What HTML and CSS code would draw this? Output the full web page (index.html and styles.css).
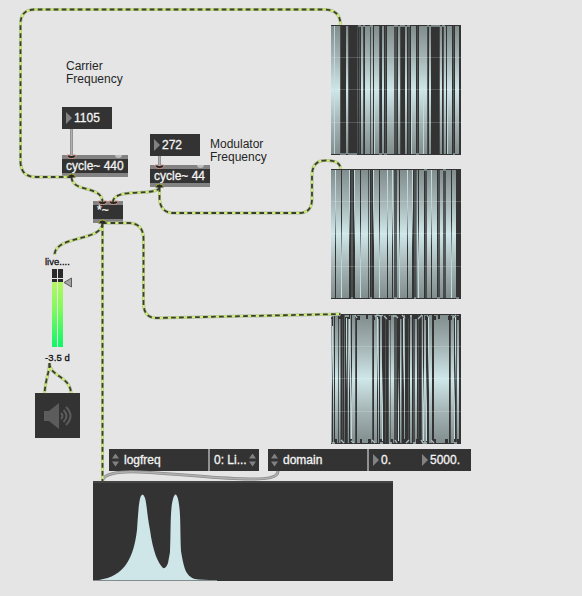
FILE: index.html
```html
<!DOCTYPE html>
<html lang="en">
<head>
<meta charset="utf-8">
<title>Ring modulation patch</title>
<link rel="stylesheet" href="styles.css">
</head>
<body>
<main class="patcher">
  <p class="comment carrier">Carrier<br>Frequency</p>
  <p class="comment modulator">Modulator<br>Frequency</p>

  <div class="node number n-carrier"><i class="tri"></i><span>1105</span></div>
  <div class="node number n-mod"><i class="tri"></i><span>272</span></div>
  <div class="node object o-carrier"><span>cycle~ 440</span></div>
  <div class="node object o-mod"><span>cycle~ 44</span></div>
  <div class="node object o-mul"><span>*~</span></div>

  <div class="gain-name">live....</div>
  <div class="gain"><i></i><i></i></div>
  <div class="gain-value">-3.5 d</div>
  <div class="dac">
    <svg width="45" height="45" viewBox="0 0 45 45"><path d="M9 18h5l10-8v26l-10-8H9z" fill="#5c5c5c"/><g fill="none" stroke="#5c5c5c" stroke-width="2"><path d="M26 20q3 3 0 6M28.500 17q6 6 0 12M31 14q9 9 0 18"/></g></svg>
  </div>

  <svg class="scope s1" viewBox="0 0 130 130">
    <defs>
      <linearGradient id="wave" gradientUnits="userSpaceOnUse" x1="0" y1="0" x2="0" y2="130"><stop offset="0" stop-color="#808c8c"/><stop offset=".25" stop-color="#a4b4b5"/><stop offset=".5" stop-color="#cfe7e9"/><stop offset=".75" stop-color="#a4b4b5"/><stop offset="1" stop-color="#808c8c"/></linearGradient>
      <linearGradient id="fall" gradientUnits="userSpaceOnUse" x1="0" y1="0" x2="0" y2="130"><stop offset="0" stop-color="#c7dfe1"/><stop offset=".3" stop-color="#bad0d2"/><stop offset=".6" stop-color="#333"/></linearGradient>
      <linearGradient id="rise" gradientUnits="userSpaceOnUse" x1="0" y1="130" x2="0" y2="0"><stop offset="0" stop-color="#c7dfe1"/><stop offset=".3" stop-color="#bad0d2"/><stop offset=".6" stop-color="#333"/></linearGradient>
    </defs>
    <path class="dim" d="M9 65h1M17 65h1M26 65h1M28 65h1M32 65h1M39 65h1M48 65h1M54 65h1M63 65h3M69 65h1M77 65h2M86 65h1M96 65h1M108 65h1M112 65h1M122 65h1"/>
    <path class="lit" d="M0 65h9M15 65h2M30 65h2M34 65h5M40 65h2M43 65h5M51 65h2M56 65h7M67 65h2M74 65h2M80 65h5M88 65h8M98 65h2M109 65h2M113 65h2M116 65h5M124 65h4"/>
    <path class="hot" d="M3.500 1v128M43.500 65v64M80.500 65v64M92.500 65v64M116.500 65v64"/>
    <path class="edge" d="M27 1h3M32 1h2M39 1h3M63 1h4M69 1h5M76 1h3M96 1h2M100 1h9M111 1h3M9 129h6M17 129h9M48 129h3M53 129h3M85 129h3M122 129h2"/>
    <path class="grid" d="M0 32.500h130M0 64.500h130M0 97.500h130"/>
  </svg>
  <svg class="scope s2" viewBox="0 0 130 130">
    <path class="dim" d="M20 65h2M37 65h1M40 65h1M63 65h3M83 65h2M94 65h2M107 65h2M112 65h3"/>
    <path class="lit" d="M0 65h4M5 65h5M11 65h7M24 65h5M30 65h7M38 65h1M43 65h5M49 65h7M57 65h4M62 65h1M66 65h2M69 65h7M77 65h4M85.500 65h1.500M88 65h5M96 65h4M101 65h5M109 65h3M115 65h5M121 65h4"/>
    <path class="fall" d="M4.500 1v128M18.500 1v128M23.500 1v128M42.500 1v128M56.500 1v128M61.500 1v128M76.500 1v128M81.500 1v128M100.500 1v128"/>
    <path class="rise" d="M10.500 1v128M29.500 1v128M48.500 1v128M68.500 1v128M87.500 1v128M120.500 1v128"/>
    <path class="edge" d="M93 1h3M112 1h3M20 129h2M39 129h2M63 129h3M83 129h2M106 129h3M125 129h3"/>
    <path class="grid" d="M0 32.500h130M0 64.500h130M0 97.500h130"/>
  </svg>
  <svg class="scope s3" viewBox="0 0 130 130">
    <path class="dim" d="M7 65h1M11 65h1M16 65h1M24 65h1M41 65h1M54 65h1M57 65h1M63 65h3M77 65h1M82 65h2M87 65h1M90 65h1M95 65h1M119 65h1M125 65h1"/>
    <path class="lit" d="M0 65h1M2 65h1M4 65h3M8 65h1.500M13.500 65h.500M17 65h1M19 65h1M21 65h3M26 65h15M43 65h3M47 65h1M49 65h2M58 65h1.500M60 65h3M69 65h1.500M73 65h1M79 65h2M84 65h2M91 65h1M93 65h2M98 65h3M103 65h15M120 65h3M126 65h2"/>
    <path class="fall" d="M1.500 12v115M15.500 4v123M18.500 4v123M46.500 3v124M72.500 4v123M97.500 3v124M124.500 3v124"/>
    <path class="rise" d="M20.500 4v123M51.500 4v123M67.500 4v123M92.500 4v123M95.500 4v123M123.500 4v121"/>
    <path class="notch" d="M0 3h2M7 3h5M16 3h3M26 4h3M35 3h2M42 4h2M47 3h2M57 4h3M67 3h4M77 3h2M82 3h4M94 4h2M103 4h2M107 3h2M117 4h4M126 4h2M3 127h3M19 127h2M29 127h2M37 127h3M49 127h2M60 127h2M72 127h2M85 127h3M103 127h2M114 127h3M126 127h2"/>
    <path class="edge jag" d="M0 3l2-2h5l2 1M14 2h4M24 1l2 3M44 3l2-2 4 1 2-1M53 2l3 3M62 2h3l2 2M71 1l3 3M79 2h2M87 5l4-4M96 1l2 3M122 4l3-3M1 129h3M10 126l3 3M20 127l3 2M41 126l3 3M49 129h3M58 129h3M64 126l2 3M75 129l3-3M82 129h3M90 126l2 3h4M100 126l3 3M123 129h3"/>
    <path class="grid" d="M0 32.500h130M0 64.500h130M0 97.500h130"/>
  </svg>

  <div class="node menu m-log"><i class="updown"></i><span>logfreq</span></div>
  <div class="node menu m-lin"><span>0: Li...</span><i class="updown"></i></div>
  <div class="node menu m-domain"><i class="updown"></i><span>domain</span></div>
  <div class="node range"><i class="tri"></i><span class="low">0.</span><i class="tri"></i><span>5000.</span></div>

  <svg class="spectrum" viewBox="0 0 300 100"><path fill="#cee6e8" d="M0 99.500V99h6C18 97 28 92 34 82C39 74 42 65 44 49C45 34 46 18 48 15Q50 11 52 17C54 24 54 34 57 49C60 71 65 82 70 87Q73 88 75 82L77 71C78 50 77 28 80 18Q82.500 9 85 18C88 30 87 49 88 70C91 88 93 95 102 98Q108 99 124 99v.500z"/><path d="M0 1h300" stroke="#434544" stroke-width="2"/></svg>

  <svg class="cords" viewBox="0 0 582 596">
    <g class="ports">
      <path d="M67 155a4.500 3.500 0 0 0 9 0zM155 165a4.500 3.500 0 0 0 9 0zM98 201a4.500 3.500 0 0 0 9 0zM109 201a4.500 3.500 0 0 0 9 0z" fill="#282828" stroke="#d9968a"/>
      <path d="M115 155a3.500 3 0 0 0 7 0zM197 165a3.500 3 0 0 0 7 0z" fill="#bdbdbd"/>
    </g>
    <g class="control"><path d="M71.500 129v27M159.500 156v10M102.500 481C103 474 118 471 139 472C185 474 218 479 250 479C267 479 278 478 278 471"/></g>
    <g class="control-core"><path d="M71.500 129v27M159.500 156v10M102.500 481C103 474 118 471 139 472C185 474 218 479 250 479C267 479 278 478 278 471"/></g>
    <defs>
      <g id="signal">
        <path d="M71.500 177H36Q20.500 177 20.500 161V24Q20.500 9.500 35 9.500H324Q340.500 9.500 340.500 25"/>
        <path d="M71.500 177C72 193 102 185 102.500 202"/>
        <path d="M159.500 187C159 197 113 187 113 202"/>
        <path d="M159.500 187V198Q160 213 174 213H299Q312 213 312 199V176Q312 160.500 325 160.500Q340.500 160 340.500 169"/>
        <path d="M102.500 223V481"/>
        <path d="M102.500 223C102 242 55 235 54.500 255"/>
        <path d="M102.500 223H128Q143.500 223 143.500 239V303Q143.500 318 157 318L340.500 314"/>
        <path d="M49.500 363C49 374 46 377 44.500 393"/>
        <path d="M49.500 363C49 376 70 376 71 393"/>
      </g>
    </defs>
    <use href="#signal" class="rim"/><use href="#signal" class="core"/><use href="#signal" class="dash"/>
    <path d="M67.500 177.500a4 3.500 0 0 1 8 0M155.500 187.500a4 3.500 0 0 1 8 0M98.500 223.500a4 3.500 0 0 1 8 0" fill="#292929" stroke="#a5ae35"/>
    <path d="M64 282.500l7.500-4.500v9z" fill="#a4a4a4" stroke="#5d5d5d"/>
  </svg>
</main>
</body>
</html>
```
FILE: styles.css
```css
body { margin: 0; }

.patcher {
  position: relative;
  width: 582px;
  height: 596px;
  overflow: hidden;
  background: #e5e5e5;
  font: 12px/13px "Liberation Sans", Arial, sans-serif;
  color: #252525;
}

.comment { position: absolute; margin: 0; }
.carrier { left: 66px; top: 60px; }
.modulator { left: 210px; top: 138px; }

.node {
  position: absolute;
  display: flex;
  align-items: center;
  box-sizing: border-box;
  height: 22px;
  background: #333;
  color: #f4f4f4;
  white-space: nowrap;
  -webkit-text-stroke: .3px #f4f4f4;
}

.tri {
  margin: 0 2px 0 4px;
  border: solid transparent;
  border-width: 6px 0 6px 6px;
  border-left-color: #828282;
}

.number { width: 50px; }
.n-carrier { left: 62px; top: 107px; }
.n-mod { left: 150px; top: 134px; }

.object {
  padding-left: 4px;
  border: solid #828282;
  border-width: 4px 0;
}
.o-carrier { left: 62px; top: 155px; width: 66px; }
.o-mod { left: 150px; top: 165px; width: 60px; }
.o-mul { left: 93px; top: 201px; width: 30px; padding-bottom: 3px; }

.gain-name, .gain-value {
  position: absolute;
  left: 45px;
  font-size: 9.5px;
  line-height: 11px;
  white-space: nowrap;
  color: #111;
  -webkit-text-stroke: .3px #111;
}
.gain-name { top: 256px; }
.gain-value { top: 352px; letter-spacing: .1px; }

.gain {
  position: absolute;
  left: 52px;
  top: 269px;
  display: flex;
  gap: 1px;
  width: 11px;
  height: 78px;
}
.gain i {
  flex: 1;
  background: linear-gradient(#2a2a2a 0 9px, #e5e5e5 9px 10px, #2a2a2a 10px 13px, #b6f661 13px, #80fa5e 40px, #0ff669 78px);
}

.dac { position: absolute; left: 35px; top: 393px; width: 45px; height: 45px; background: #333; }
.dac svg { display: block; }

.scope { position: absolute; left: 331px; width: 130px; height: 130px; background: #333; }
.s1 { top: 25px; }
.s2 { top: 169px; }
.s3 { top: 314px; }
.scope path { fill: none; }
/* Each bar is a short horizontal segment with a stroke as tall as the scope. */
.lit { stroke: url(#wave); stroke-width: 128px; }
.dim { stroke: url(#wave); stroke-width: 128px; opacity: .25; }
.hot { stroke: #c7dfe1; stroke-width: 1px; opacity: .8; }
.fall { stroke: url(#fall); stroke-width: 1px; }
.rise { stroke: url(#rise); stroke-width: 1px; }
.edge { stroke: #8c9a9b; stroke-width: 1.5px; }
.jag { stroke: #a9bbbc; stroke-width: 1.3px; }
.notch { stroke: #333; stroke-width: 4px; }
.grid { stroke: #e4eeee; stroke-width: 1px; opacity: .2; }

.updown {
  flex: none;
  width: 7px;
  height: 13px;
  background: #828282;
  clip-path: polygon(0 5px, 3.5px 0, 7px 5px, 0 5px, 0 8px, 7px 8px, 3.5px 13px, 0 8px);
}
.m-log { left: 109px; top: 449px; width: 99px; padding-left: 3px; gap: 5px; }
.m-lin { left: 210px; top: 449px; width: 49px; padding: 0 3px 0 4px; justify-content: space-between; box-shadow: -2px 0 #929292; }
.m-domain { left: 268px; top: 449px; width: 99px; padding-left: 3px; gap: 5px; }
.range { left: 369px; top: 449px; width: 102px; box-shadow: -2px 0 #929292; }
.range .low { width: 37px; }

.spectrum { position: absolute; left: 93px; top: 481px; width: 300px; height: 100px; background: #333; }

.cords { position: absolute; left: 0; top: 0; width: 582px; height: 596px; fill: none; }
.control { stroke: #8b8b8b; stroke-width: 3px; }
.control-core { stroke: #b0b0b0; stroke-width: 1.5px; }
.rim { stroke: #adb39c; stroke-width: 3px; }
.core { stroke: #cdf073; stroke-width: 2px; }
.dash { stroke: #3b3d30; stroke-width: 1.8px; stroke-dasharray: 4.7 3.3; }
```
